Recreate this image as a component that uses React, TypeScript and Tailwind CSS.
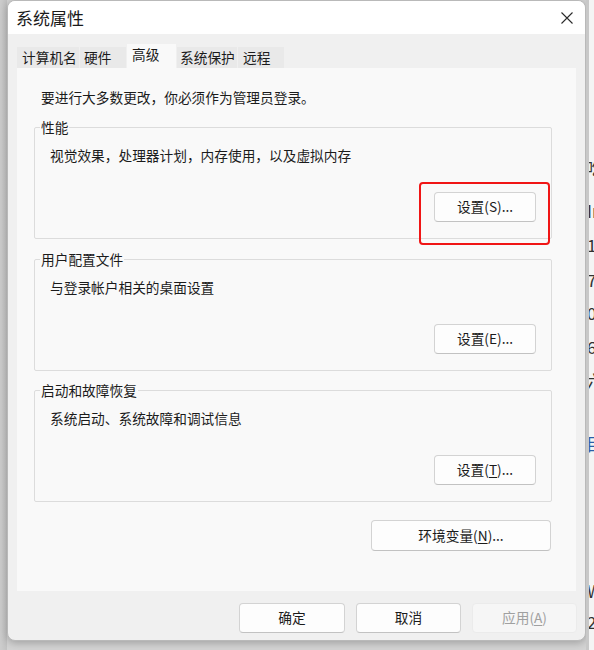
import React from "react";

function Btn({
  children,
  className = "",
}: {
  children: React.ReactNode;
  className?: string;
}) {
  return (
    <button
      className={`h-[30px] rounded-[4px] border border-[#d3d3d3] border-b-[#c2c2c2] bg-[#fdfdfd] text-[13.7px] leading-none text-[#1b1b1b] flex items-center justify-center ${className}`}
    >
      {children}
    </button>
  );
}

function Group({
  title,
  desc,
  children,
}: {
  title: string;
  desc: string;
  children: React.ReactNode;
}) {
  return (
    <fieldset className="h-[122px] border border-[#dcdcdc] rounded-[2px] p-0 m-0 min-w-0">
      <legend className="ml-[5px] px-[1px] text-[13.7px] leading-[20px] text-[#1b1b1b]">
        {title}
      </legend>
      <div className="flex flex-col pl-[15px] pr-[15px] pt-[8px]">
        <div className="text-[13.7px] leading-[20px] text-[#1b1b1b]">{desc}</div>
        <div className="mt-[27px] flex justify-end">{children}</div>
      </div>
    </fieldset>
  );
}

const U = ({ c }: { c: string }) => (
  <span className="underline underline-offset-[2px] decoration-[1px]">{c}</span>
);

export default function App() {
  return (
    <div className="w-[594px] h-[650px] flex bg-[#d4d4d4] overflow-hidden font-['Noto_Sans_CJK_SC','Noto_Sans',sans-serif]">
      {/* left gutter */}
      <div className="w-[7px] shrink-0 bg-gradient-to-r from-[#cdcdcd] to-[#c3c3c3]" />

      {/* dialog column */}
      <div className="w-[579px] shrink-0 flex flex-col">
        <div className="h-[641px] flex flex-col rounded-[8px] border border-[#b9b9b9] bg-[#f0f0f0] overflow-hidden shadow-[0_2px_8px_rgba(0,0,0,0.25)]">
          {/* title bar */}
          <div className="h-[33px] shrink-0 bg-white flex items-center justify-between pl-[8px] pr-[12px]">
            <span className="text-[17px] leading-none text-[#1a1a1a]">系统属性</span>
            <svg width="12" height="12" viewBox="0 0 12 12" className="block">
              <path d="M0.5 0.5 L11.5 11.5 M11.5 0.5 L0.5 11.5" stroke="#2b2b2b" strokeWidth="1.1" fill="none" />
            </svg>
          </div>

          {/* body */}
          <div className="flex-1 flex flex-col px-[9px] pt-[10px] pb-[8px]">
            {/* tabs */}
            <div className="h-[24px] flex items-end gap-[1px] text-[13.7px] text-[#1b1b1b]">
              <div className="w-[62px] h-[21px] bg-[#e9e9e9] pl-[5px] flex items-center leading-none">计算机名</div>
              <div className="w-[46px] h-[21px] bg-[#e9e9e9] pl-[4px] flex items-center leading-none">硬件</div>
              <div className="w-[49px] h-[24px] bg-[#f9f9f9] pl-[5px] flex items-center leading-none pb-[3px]">高级</div>
              <div className="w-[60px] h-[21px] bg-[#e9e9e9] pl-[3px] flex items-center leading-none">系统保护</div>
              <div className="w-[46px] h-[21px] bg-[#e9e9e9] pl-[5px] flex items-center leading-none">远程</div>
            </div>

            {/* panel */}
            <div className="h-[523px] bg-[#f9f9f9] pl-[17px] pr-[24px] pt-[19px] flex flex-col">
              <div className="ml-[7px] text-[13.7px] leading-[20px] text-[#1b1b1b]">
                要进行大多数更改，你必须作为管理员登录。
              </div>

              <div className="mt-[10px]">
                <Group title="性能" desc="视觉效果，处理器计划，内存使用，以及虚拟内存">
                  <div className="relative">
                    <Btn className="w-[102px] border-[#79b0e4] border-b-[#79b0e4]">设置(S)...</Btn>
                    <div className="absolute -left-[15px] -right-[14px] -top-[10px] -bottom-[23px] border-[2.5px] border-[#f01515] rounded-[4px] pointer-events-none" />
                  </div>
                </Group>
              </div>

              <div className="mt-[10px]">
                <Group title="用户配置文件" desc="与登录帐户相关的桌面设置">
                  <Btn className="w-[102px]">设置(E)...</Btn>
                </Group>
              </div>

              <div className="mt-[9px]">
                <Group title="启动和故障恢复" desc="系统启动、系统故障和调试信息">
                  <Btn className="w-[102px]">
                    设置(<U c="T" />)...
                  </Btn>
                </Group>
              </div>

              <div className="mt-[18px] flex justify-end mr-[1px]">
                <Btn className="w-[180px] h-[31px]">
                  环境变量(<U c="N" />)...
                </Btn>
              </div>
            </div>

            {/* bottom buttons */}
            <div className="mt-[12px] flex justify-end gap-[11px] mr-[-1px]">
              <Btn className="w-[106px]">确定</Btn>
              <Btn className="w-[105px]">取消</Btn>
              <button className="w-[105px] h-[30px] rounded-[4px] border border-[#ebebeb] bg-[#f6f6f6] text-[13.7px] leading-none text-[#a0a0a0] flex items-center justify-center">
                应用(<U c="A" />)
              </button>
            </div>
          </div>
        </div>
        <div className="flex-1" />
      </div>

      {/* background window fragment on the right */}
      <div className="w-[8px] shrink-0 bg-[#f4f4f4] border-l-[3px] border-[#c8c8c8] overflow-hidden flex flex-col pt-[151px] text-[17px] text-[#333] font-['Noto_Sans_CJK_SC','Noto_Sans',sans-serif]">
        <div className="h-[60px] leading-[34px] -ml-[3px] whitespace-nowrap">吃</div>
        <div className="h-[34px] leading-[0px] -ml-[2px] whitespace-nowrap">In</div>
        <div className="h-[35px] leading-[0px] -ml-[2px] whitespace-nowrap">1</div>
        <div className="h-[33px] leading-[0px] -ml-[2px] whitespace-nowrap">7</div>
        <div className="h-[34px] leading-[0px] -ml-[2px] whitespace-nowrap">0</div>
        <div className="h-[34px] leading-[0px] -ml-[2px] whitespace-nowrap">6</div>
        <div className="h-[63px] leading-[0px] -ml-[3px] whitespace-nowrap">六</div>
        <div className="h-[147px] leading-[0px] -ml-[3px] whitespace-nowrap text-[#2a5ea8]">目</div>
        <div className="h-[31px] leading-[0px] -ml-[2px] whitespace-nowrap">W</div>
        <div className="h-[20px] leading-[0px] -ml-[2px] whitespace-nowrap">2</div>
      </div>
    </div>
  );
}
